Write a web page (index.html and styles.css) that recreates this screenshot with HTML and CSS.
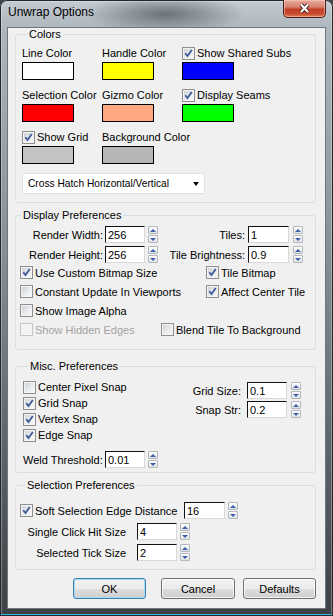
FILE: index.html
```html
<!DOCTYPE html>
<html lang="en">
<head>
    <meta charset="UTF-8">
    <meta name="viewport" content="width=device-width, initial-scale=1.0">
    <title>Unwrap Options</title>
    <link rel="stylesheet" href="styles.css">
</head>
<body>
<div class="window">
    <div class="titlebar">
        <span class="title">Unwrap Options</span>
        <button class="close-btn" title="Close">
            <svg width="13" height="11" viewBox="0 0 13 11"><path class="x-outline" d="M3 1.5l7 7.5M10 1.5l-7 7.5"/><path class="x-fill" d="M3 1.5l7 7.5M10 1.5l-7 7.5"/></svg>
        </button>
    </div>

    <div class="client">
        <fieldset class="group group-colors">
            <legend>Colors</legend>
            <div class="color-grid">
                <div class="color-cell"><div class="cell-label">Line Color</div><div class="swatch sw-line"></div></div>
                <div class="color-cell"><div class="cell-label">Handle Color</div><div class="swatch sw-handle"></div></div>
                <div class="color-cell">
                    <label class="check cell-label"><span class="cb on"><svg viewBox="0 0 11 11"><path d="M2.3 5.2l2.2 2.8L8.8 2"/></svg></span>Show Shared Subs</label>
                    <div class="swatch sw-shared"></div>
                </div>

                <div class="color-cell"><div class="cell-label">Selection Color</div><div class="swatch sw-selection"></div></div>
                <div class="color-cell"><div class="cell-label">Gizmo Color</div><div class="swatch sw-gizmo"></div></div>
                <div class="color-cell">
                    <label class="check cell-label"><span class="cb on"><svg viewBox="0 0 11 11"><path d="M2.3 5.2l2.2 2.8L8.8 2"/></svg></span>Display Seams</label>
                    <div class="swatch sw-seams"></div>
                </div>

                <div class="color-cell">
                    <label class="check cell-label"><span class="cb on"><svg viewBox="0 0 11 11"><path d="M2.3 5.2l2.2 2.8L8.8 2"/></svg></span>Show Grid</label>
                    <div class="swatch sw-grid"></div>
                </div>
                <div class="color-cell"><div class="cell-label">Background Color</div><div class="swatch sw-background"></div></div>
            </div>

            <div class="dropdown">
                <span>Cross Hatch Horizontal/Vertical</span>
                <span class="drop-arrow"></span>
            </div>
        </fieldset>

        <fieldset class="group group-display">
            <legend>Display Preferences</legend>
            <div class="spin-row">
                <label class="field-label w-render">Render Width:</label>
                <input class="num" value="256">
                <span class="spin"><span class="spin-up"></span><span class="spin-dn"></span></span>
                <label class="field-label w-tiles">Tiles:</label>
                <input class="num num-right" value="1">
                <span class="spin spin-right"><span class="spin-up"></span><span class="spin-dn"></span></span>
            </div>
            <div class="spin-row">
                <label class="field-label w-render">Render Height:</label>
                <input class="num" value="256">
                <span class="spin"><span class="spin-up"></span><span class="spin-dn"></span></span>
                <label class="field-label w-tiles">Tile Brightness:</label>
                <input class="num num-right" value="0.9">
                <span class="spin spin-right"><span class="spin-up"></span><span class="spin-dn"></span></span>
            </div>

            <div class="check-row">
                <label class="check col-wide"><span class="cb on"><svg viewBox="0 0 11 11"><path d="M2.3 5.2l2.2 2.8L8.8 2"/></svg></span>Use Custom Bitmap Size</label>
                <label class="check"><span class="cb on"><svg viewBox="0 0 11 11"><path d="M2.3 5.2l2.2 2.8L8.8 2"/></svg></span>Tile Bitmap</label>
            </div>
            <div class="check-row">
                <label class="check col-wide"><span class="cb"></span>Constant Update In Viewports</label>
                <label class="check"><span class="cb on"><svg viewBox="0 0 11 11"><path d="M2.3 5.2l2.2 2.8L8.8 2"/></svg></span>Affect Center Tile</label>
            </div>
            <div class="check-row">
                <label class="check"><span class="cb"></span>Show Image Alpha</label>
            </div>
            <div class="check-row">
                <label class="check disabled col-narrow"><span class="cb"></span>Show Hidden Edges</label>
                <label class="check"><span class="cb"></span>Blend Tile To Background</label>
            </div>
        </fieldset>

        <fieldset class="group group-misc">
            <legend>Misc. Preferences</legend>
            <div class="misc-body">
                <div class="misc-checks">
                    <label class="check misc-check"><span class="cb"></span>Center Pixel Snap</label>
                    <label class="check misc-check"><span class="cb on"><svg viewBox="0 0 11 11"><path d="M2.3 5.2l2.2 2.8L8.8 2"/></svg></span>Grid Snap</label>
                    <label class="check misc-check"><span class="cb on"><svg viewBox="0 0 11 11"><path d="M2.3 5.2l2.2 2.8L8.8 2"/></svg></span>Vertex Snap</label>
                    <label class="check misc-check"><span class="cb on"><svg viewBox="0 0 11 11"><path d="M2.3 5.2l2.2 2.8L8.8 2"/></svg></span>Edge Snap</label>
                </div>
                <div class="misc-fields">
                    <div class="spin-row">
                        <label class="field-label w-snap">Grid Size:</label>
                        <input class="num num-snap" value="0.1">
                        <span class="spin spin-right"><span class="spin-up"></span><span class="spin-dn"></span></span>
                    </div>
                    <div class="spin-row">
                        <label class="field-label w-snap">Snap Str:</label>
                        <input class="num num-snap" value="0.2">
                        <span class="spin spin-right"><span class="spin-up"></span><span class="spin-dn"></span></span>
                    </div>
                </div>
            </div>
            <div class="spin-row weld-row">
                <label class="field-label w-weld">Weld Threshold:</label>
                <input class="num num-weld" value="0.01">
                <span class="spin"><span class="spin-up"></span><span class="spin-dn"></span></span>
            </div>
        </fieldset>

        <fieldset class="group group-selection">
            <legend>Selection Preferences</legend>
            <div class="spin-row">
                <label class="check w-soft"><span class="cb on"><svg viewBox="0 0 11 11"><path d="M2.3 5.2l2.2 2.8L8.8 2"/></svg></span>Soft Selection Edge Distance</label>
                <input class="num num-wide" value="16">
                <span class="spin"><span class="spin-up"></span><span class="spin-dn"></span></span>
            </div>
            <div class="spin-row sel-row">
                <label class="field-label w-sel">Single Click Hit Size</label>
                <input class="num num-sel" value="4">
                <span class="spin"><span class="spin-up"></span><span class="spin-dn"></span></span>
            </div>
            <div class="spin-row sel-row">
                <label class="field-label w-sel">Selected Tick Size</label>
                <input class="num num-sel" value="2">
                <span class="spin"><span class="spin-up"></span><span class="spin-dn"></span></span>
            </div>
        </fieldset>

        <div class="buttons">
            <button class="btn btn-default">OK</button>
            <button class="btn btn-cancel">Cancel</button>
            <button class="btn">Defaults</button>
        </div>
    </div>
</div>
</body>
</html>
```

FILE: styles.css
```css
:root {
    --client-bg: #f0f0f0;
    --group-border: #d5dfe5;
    --check-color: #3e5a99;
    --spin-arrow: #3d5fae;
    --disabled-text: #a3a3a3;
}

* {
    box-sizing: border-box;
}

body {
    margin: 0;
    font-family: "Liberation Sans", Arial, sans-serif;
    font-size: 11px;
    color: #000;
    background: #3c4145;
}

/* window frame */
.window {
    width: 333px;
    height: 616px;
    padding: 0 8px 8px 8px;
    display: flex;
    flex-direction: column;
    border-radius: 7px 7px 0 0;
    background:
        radial-gradient(ellipse 80px 20px at 165px 14px, rgba(45, 50, 55, 0.55), rgba(45, 50, 55, 0)),
        linear-gradient(to bottom, #c4cbd2 0px, #aeb6be 28px, #8d959c 220px, #5d6469 450px, #3b4044 616px);
    box-shadow:
        inset 0 0 0 1px #23282c,
        inset 0 -2px 0 #38b6e6,
        inset 0 0 0 2px rgba(255, 255, 255, 0.3);
}

.titlebar {
    height: 28px;
    display: flex;
    align-items: flex-start;
    flex-shrink: 0;
}

.title {
    font-size: 12px;
    line-height: 15px;
    padding-top: 5px;
    color: #000;
}

.close-btn {
    margin-left: auto;
    margin-right: -1px;
    margin-top: 0;
    width: 43px;
    height: 18px;
    padding: 0;
    border: 1px solid #4a2018;
    border-top: none;
    border-radius: 0 0 5px 5px;
    display: flex;
    align-items: center;
    justify-content: center;
    background: linear-gradient(to bottom, #e8a99a 0%, #d98473 40%, #c23f26 55%, #c74b2e 80%, #dc7a52 100%);
    box-shadow: inset 0 0 0 1px rgba(255, 220, 210, 0.45);
}

.close-btn svg path {
    fill: none;
    stroke-linecap: butt;
}

.x-outline {
    stroke: #3a1a14;
    stroke-width: 4;
}

.x-fill {
    stroke: #ffffff;
    stroke-width: 2.2;
}

.client {
    flex: 1;
    background: var(--client-bg);
    padding: 0 9px 0 7px;
    box-shadow: 0 0 0 1px #6f777d;
}

/* group boxes */
.group {
    margin: 0;
    padding: 5px 6px 8px 6px;
    border: 1px solid var(--group-border);
    border-radius: 3px;
    min-width: 0;
}

.group legend {
    padding: 0 2px;
    margin-left: 5px;
    line-height: 13px;
}

.group-display {
    margin-top: 6px;
    padding: 4px 0 10px 0;
}

.group-misc {
    margin-top: 10px;
    padding: 6px 0 4px 7px;
}

.group-selection {
    margin-top: 6px;
    padding: 10px 0 8px 4px;
}

/* colors */
.color-grid {
    display: grid;
    grid-template-columns: 80px 80px 80px;
    row-gap: 8px;
}

.cell-label {
    line-height: 14px;
    height: 14px;
    white-space: nowrap;
}

.swatch {
    margin-top: 2px;
    width: 52px;
    height: 18px;
    border: 1px solid #000;
}

.sw-line { background: #ffffff; }
.sw-handle { background: #ffff00; }
.sw-shared { background: #0000ff; }
.sw-selection { background: #ff0000; }
.sw-gizmo { background: #ffa880; }
.sw-seams { background: #00ff00; }
.sw-grid { background: #c3c3c3; }
.sw-background { background: #b6b6b6; }

.dropdown {
    margin-top: 9px;
    width: 183px;
    height: 21px;
    border: 1px solid #e2e2e2;
    border-radius: 2px;
    background: #fff;
    display: flex;
    align-items: center;
    justify-content: space-between;
    padding: 0 5px 0 5px;
    font-size: 10.2px;
}

.drop-arrow {
    width: 0;
    height: 0;
    border-left: 3.5px solid transparent;
    border-right: 3.5px solid transparent;
    border-top: 4px solid #000;
}

/* checkboxes */
.check {
    display: flex;
    align-items: center;
    gap: 2px;
    white-space: nowrap;
}

.cb {
    width: 13px;
    height: 13px;
    flex-shrink: 0;
    border: 1px solid #8f8f8f;
    background: linear-gradient(135deg, #c8ccd2 0%, #eceef0 60%, #f8f8f8 100%);
    box-shadow: inset 0 0 0 1px #f4f4f4;
    display: flex;
    align-items: center;
    justify-content: center;
}

.cb svg {
    width: 11px;
    height: 11px;
}

.cb svg path {
    fill: none;
    stroke: var(--check-color);
    stroke-width: 1.8;
}

.check.disabled {
    color: var(--disabled-text);
}

.check.disabled .cb {
    border-color: #c6c6c6;
    background: #f4f4f4;
}

.check-row {
    display: flex;
    align-items: center;
    height: 19px;
    padding-left: 4px;
}

.check-row:first-of-type {
    margin-top: 1px;
}

.col-wide {
    width: 186px;
}

.col-narrow {
    width: 141px;
}

/* numeric fields */
.spin-row {
    display: flex;
    align-items: center;
    height: 17px;
}

.spin-row + .spin-row {
    margin-top: 3px;
}

.field-label {
    text-align: right;
    white-space: nowrap;
}

.w-render { width: 87px; }
.w-tiles { width: 87px; }
.w-snap { width: 50px; }
.w-weld { width: 77px; text-align: left; }
.w-sel { width: 106px; }
.w-soft { width: 164px; }

.num {
    width: 40px;
    height: 17px;
    margin: 0 0 0 2px;
    padding: 0 2px;
    font-family: "Liberation Sans", Arial, sans-serif;
    font-size: 11px;
    color: #000;
    background: #fff;
    border: 1px solid;
    border-color: #111 #d9d9d9 #d9d9d9 #111;
    outline: none;
}

.num-right { margin-left: 3px; width: 41px; }
.num-snap { margin-left: 6px; }
.num-weld { margin-left: 5px; }
.num-wide { margin-left: 0; width: 41px; }
.num-sel { margin-left: 11px; }

.spin {
    width: 10px;
    height: 17px;
    margin-left: 3px;
    display: flex;
    flex-direction: column;
    gap: 1px;
}

.spin-right {
    margin-left: 4px;
}

.spin-up,
.spin-dn {
    flex: 1;
    border: 1px solid #b4b8bd;
    border-radius: 1px;
    background: linear-gradient(to bottom, #fdfdfd, #e1e3e6);
    display: flex;
    align-items: center;
    justify-content: center;
}

.spin-up::after {
    content: "";
    border-left: 3px solid transparent;
    border-right: 3px solid transparent;
    border-bottom: 3px solid var(--spin-arrow);
}

.spin-dn::after {
    content: "";
    border-left: 3px solid transparent;
    border-right: 3px solid transparent;
    border-top: 3px solid var(--spin-arrow);
}

/* misc */
.misc-body {
    display: flex;
}

.misc-checks {
    width: 168px;
}

.misc-check {
    height: 16px;
}

.misc-fields {
    margin-top: 3px;
}

.misc-fields .spin-row + .spin-row {
    margin-top: 2px;
}

.spin-row.weld-row {
    margin-top: 8px;
}

.spin-row.sel-row {
    margin-top: 4px;
}

/* buttons */
.buttons {
    display: flex;
    justify-content: flex-end;
    margin-top: 8px;
}

.btn {
    width: 73px;
    height: 21px;
    padding: 0;
    font-family: "Liberation Sans", Arial, sans-serif;
    font-size: 11px;
    color: #000;
    border: 1px solid #707070;
    border-radius: 3px;
    background: linear-gradient(to bottom, #f2f2f2 0%, #ebebeb 50%, #dddddd 51%, #cfcfcf 100%);
    box-shadow: inset 0 0 0 1px rgba(255, 255, 255, 0.7);
}

.btn-default {
    margin-right: 15px;
    border-color: #3c7fb1;
    box-shadow: inset 0 0 0 1px #a6dcf7;
}

.btn-cancel {
    width: 74px;
    margin-right: 8px;
}
```
